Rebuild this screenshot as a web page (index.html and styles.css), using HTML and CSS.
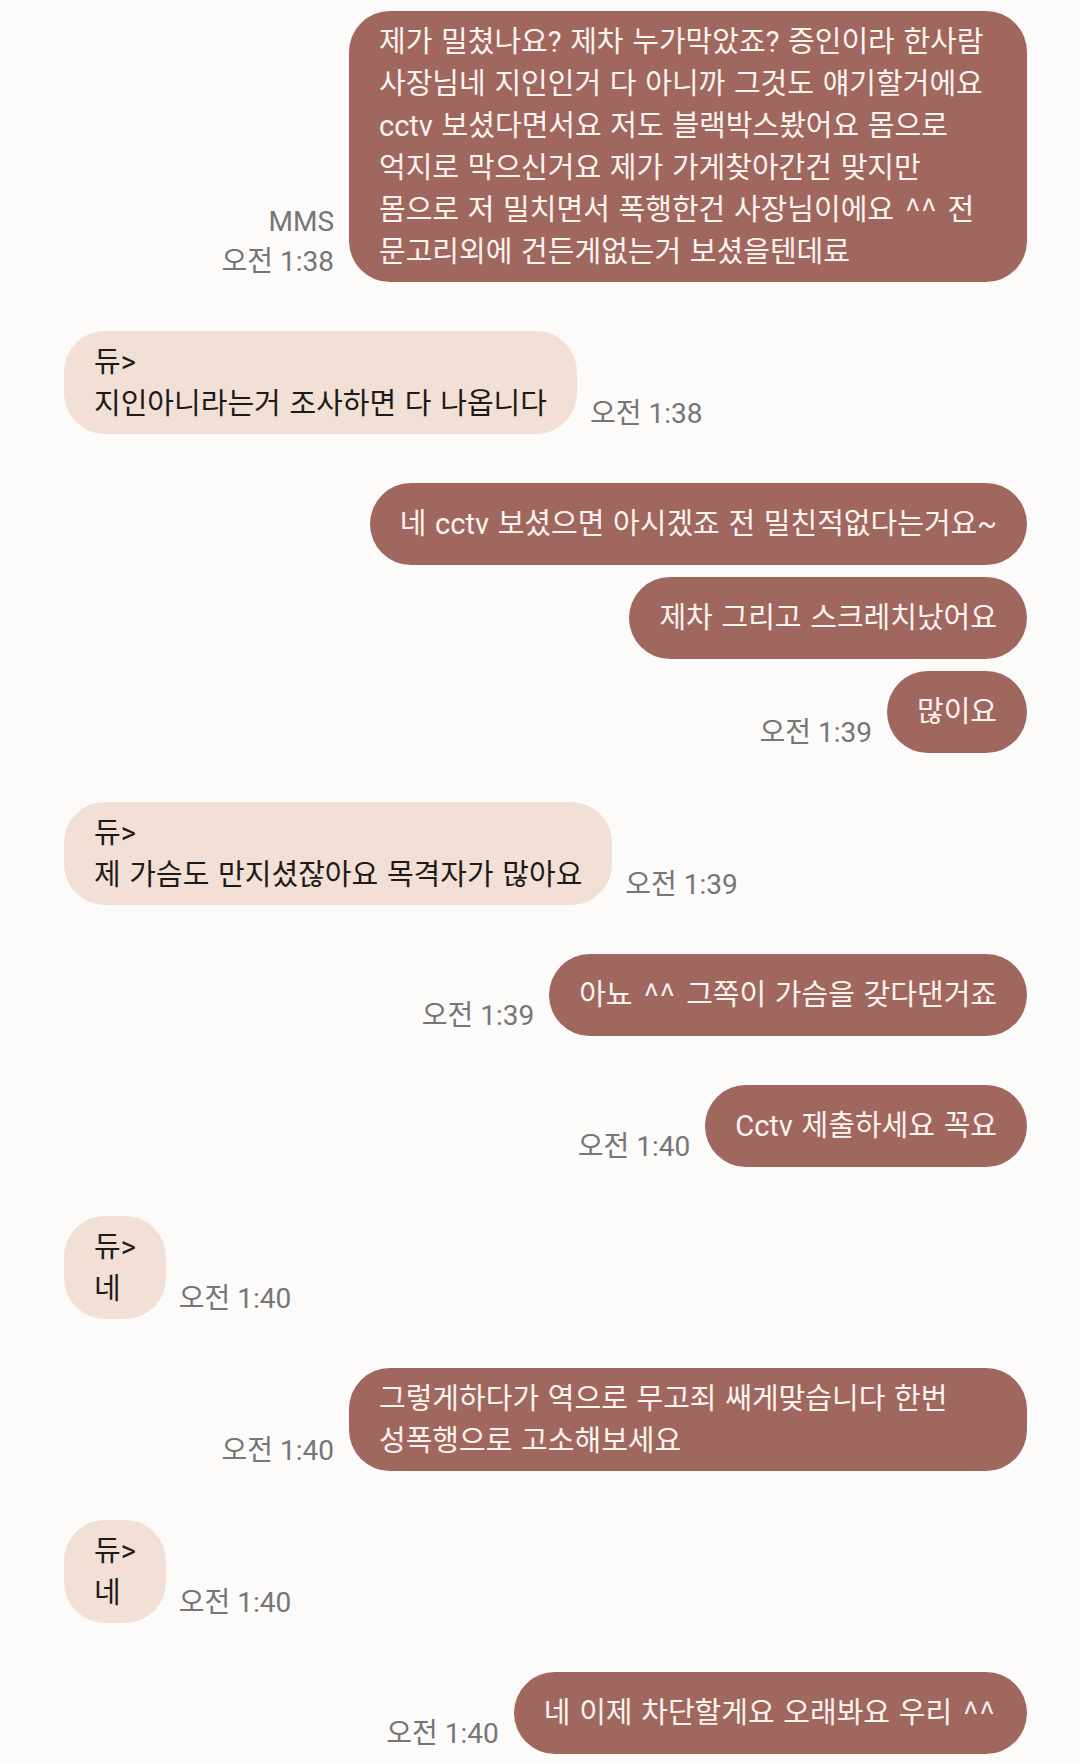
FILE: index.html
```html
<!DOCTYPE html>
<html lang="ko">
<head>
    <meta charset="UTF-8">
    <meta name="viewport" content="width=device-width, initial-scale=1.0">
    <title>메시지</title>
    <link rel="stylesheet" href="styles.css">
</head>
<body>
    <div class="chat">
        <div class="row sent">
            <div class="meta"><span>MMS</span><span>오전 1:38</span></div>
            <div class="bubble long">제가 밀쳤나요? 제차 누가막았죠? 증인이라 한사람<br>사장님네 지인인거 다 아니까 그것도 얘기할거에요<br>cctv 보셨다면서요 저도 블랙박스봤어요 몸으로<br>억지로 막으신거요 제가 가게찾아간건 맞지만<br>몸으로 저 밀치면서 폭행한건 사장님이에요 <span class="emo">^^</span> 전<br>문고리외에 건든게없는거 보셨을텐데료</div>
        </div>

        <div class="row recv">
            <div class="bubble two">듀&gt;<br>지인아니라는거 조사하면 다 나옵니다</div>
            <div class="meta"><span>오전 1:38</span></div>
        </div>

        <div class="row sent">
            <div class="bubble">네 cctv 보셨으면 아시겠죠 전 밀친적없다는거요~</div>
        </div>
        <div class="row sent cont">
            <div class="bubble">제차 그리고 스크레치났어요</div>
        </div>
        <div class="row sent cont">
            <div class="meta"><span>오전 1:39</span></div>
            <div class="bubble">많이요</div>
        </div>

        <div class="row recv">
            <div class="bubble two">듀&gt;<br>제 가슴도 만지셨잖아요 목격자가 많아요</div>
            <div class="meta"><span>오전 1:39</span></div>
        </div>

        <div class="row sent">
            <div class="meta"><span>오전 1:39</span></div>
            <div class="bubble">아뇨 <span class="emo">^^</span> 그쪽이 가슴을 갖다댄거죠</div>
        </div>

        <div class="row sent">
            <div class="meta"><span>오전 1:40</span></div>
            <div class="bubble">Cctv 제출하세요 꼭요</div>
        </div>

        <div class="row recv">
            <div class="bubble two">듀&gt;<br>네</div>
            <div class="meta"><span>오전 1:40</span></div>
        </div>

        <div class="row sent">
            <div class="meta"><span>오전 1:40</span></div>
            <div class="bubble long two">그렇게하다가 역으로 무고죄 쌔게맞습니다 한번<br>성폭행으로 고소해보세요</div>
        </div>

        <div class="row recv">
            <div class="bubble two">듀&gt;<br>네</div>
            <div class="meta"><span>오전 1:40</span></div>
        </div>

        <div class="row sent">
            <div class="meta"><span>오전 1:40</span></div>
            <div class="bubble">네 이제 차단할게요 오래봐요 우리 <span class="emo">^^</span></div>
        </div>
    </div>
</body>
</html>
```

FILE: styles.css
```css
body {
    margin: 0;
    padding: 0;
    background-color: #fcfbfa;
    font-family: Roboto, "Noto Sans CJK KR", sans-serif;
}

.chat {
    display: flex;
    flex-direction: column;
    padding: 11px 53px 0 64px;
}

.row {
    display: flex;
    align-items: flex-end;
    margin-top: 49px;
}

.row:first-child {
    margin-top: 0;
}

.row.cont {
    margin-top: 12px;
}

.row.sent {
    justify-content: flex-end;
}

.bubble {
    padding: 20px 30px;
    border-radius: 41px;
    font-size: 29px;
    line-height: 42px;
    word-spacing: 1.5px;
    white-space: nowrap;
}

.bubble.long,
.bubble.two {
    padding: 10px 30px 9px;
}

.bubble.long {
    box-sizing: border-box;
    width: 678px;
}

.sent .bubble {
    background-color: #a0675f;
    color: #fdf4f0;
}

.recv .bubble {
    background-color: #f2dfd6;
    color: #1e1a19;
}

.emo {
    font-family: "Noto Sans CJK KR", sans-serif;
    line-height: 1;
    margin: 0 2px;
}

.meta {
    display: flex;
    flex-direction: column;
    font-size: 28px;
    line-height: 40px;
    color: #767676;
    white-space: nowrap;
}

.sent .meta {
    align-items: flex-end;
    margin-right: 15px;
}

.recv .meta {
    margin-left: 13px;
}
```
